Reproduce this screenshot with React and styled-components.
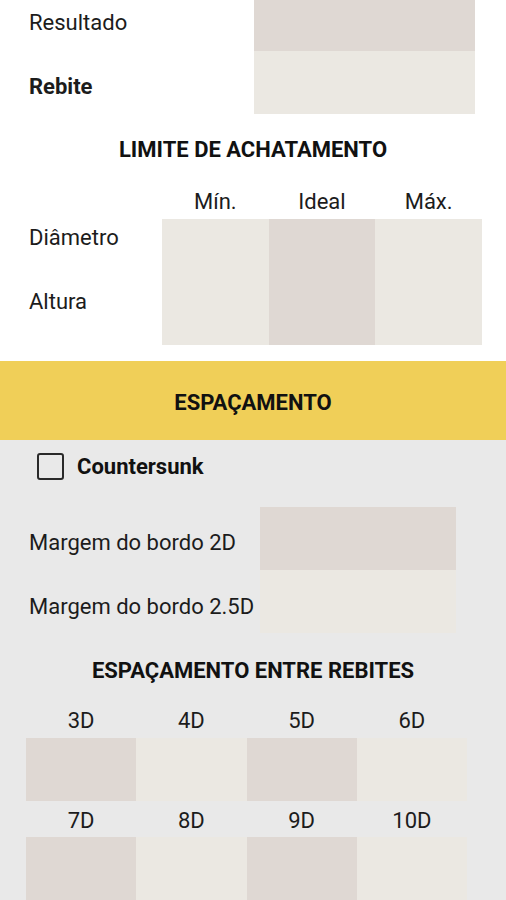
import React from 'react';
import styled, { createGlobalStyle } from 'styled-components';

const GlobalStyle = createGlobalStyle`
  html, body {
    margin: 0;
    padding: 0;
    background: #e9e9e9;
  }
  body {
    width: 506px;
    height: 900px;
    overflow: hidden;
    font-family: Roboto, 'Liberation Sans', sans-serif;
    color: #1c1c1c;
  }
`;

const DARK = '#dfd8d3';
const LIGHT = '#ebe8e2';

const Page = styled.div`
  width: 506px;
  display: flex;
  flex-direction: column;
`;

const WhiteSection = styled.section`
  background: #ffffff;
  margin-top: -12px;
  padding-bottom: 16px;
`;

const GraySection = styled.section`
  background: #e9e9e9;
  padding-bottom: 40px;
`;

const FieldRow = styled.div`
  display: grid;
  grid-template-columns: ${(p) => p.labelWidth}px ${(p) => p.boxWidth}px;
  height: 63px;
`;

const Label = styled.div`
  font-size: 22px;
  line-height: 24px;
  padding-left: 29px;
  padding-top: ${(p) => p.top || 24}px;
  font-weight: ${(p) => (p.bold ? 700 : 400)};
  white-space: nowrap;
`;

const Box = styled.div`
  background: ${(p) => (p.dark ? DARK : LIGHT)};
`;

const Title = styled.h2`
  margin: ${(p) => p.top}px 0 0;
  font-size: 22px;
  line-height: 24px;
  font-weight: 700;
  text-align: center;
  color: #111;
`;

const LimitHead = styled.div`
  display: grid;
  grid-template-columns: 162px repeat(3, 106.67px);
  margin-top: 26px;
  height: 31px;
`;

const HeadCell = styled.div`
  font-size: 22px;
  line-height: 28px;
  text-align: center;
`;

const LimitGrid = styled.div`
  display: grid;
  grid-template-columns: 162px repeat(3, 106.67px);
  grid-template-rows: 63px 63px;
`;

const Banner = styled.div`
  height: 79px;
  background: #f0cf58;
  display: flex;
  align-items: center;
  justify-content: center;
  padding-top: 3px;
  box-sizing: border-box;
  font-size: 22px;
  font-weight: 700;
  color: #111;
`;

const CheckRow = styled.label`
  display: flex;
  align-items: center;
  gap: 13px;
  padding: 12px 0 0 37px;
  height: 28px;
  font-size: 22px;
  font-weight: 700;
  color: #111;
`;

const CheckBox = styled.span`
  width: 27px;
  height: 27px;
  box-sizing: border-box;
  border: 2.5px solid #2a2a2a;
  border-radius: 3px;
`;

const MarginBlock = styled.div`
  margin-top: 27px;
`;

const SpacingGrid = styled.div`
  display: grid;
  grid-template-columns: repeat(4, 110.25px);
  row-gap: 8px;
  padding-left: 26px;
  margin-top: 26px;
`;

const Cell = styled.div`
  display: flex;
  flex-direction: column;
`;

const CellLabel = styled.div`
  font-size: 22px;
  line-height: 24px;
  text-align: center;
  margin-bottom: 4.5px;
`;

const CellBox = styled.div`
  height: 63px;
  background: ${(p) => (p.dark ? DARK : LIGHT)};
`;

const spacing = ['3D', '4D', '5D', '6D', '7D', '8D', '9D', '10D'];

export default function App() {
  return (
    <Page>
      <GlobalStyle />
      <WhiteSection>
        <FieldRow labelWidth={254} boxWidth={221}>
          <Label top={23}>Resultado</Label>
          <Box dark />
        </FieldRow>
        <FieldRow labelWidth={254} boxWidth={221}>
          <Label bold top={24}>Rebite</Label>
          <Box />
        </FieldRow>

        <Title top={24}>LIMITE DE ACHATAMENTO</Title>

        <LimitHead>
          <span />
          <HeadCell>Mín.</HeadCell>
          <HeadCell>Ideal</HeadCell>
          <HeadCell>Máx.</HeadCell>
        </LimitHead>
        <LimitGrid>
          <Label top={7}>Diâmetro</Label>
          <Box />
          <Box dark />
          <Box />
          <Label top={8}>Altura</Label>
          <Box />
          <Box dark />
          <Box />
        </LimitGrid>
      </WhiteSection>

      <Banner>ESPAÇAMENTO</Banner>

      <GraySection>
        <CheckRow>
          <CheckBox />
          Countersunk
        </CheckRow>

        <MarginBlock>
          <FieldRow labelWidth={260} boxWidth={196}>
            <Label top={24}>Margem do bordo 2D</Label>
            <Box dark />
          </FieldRow>
          <FieldRow labelWidth={260} boxWidth={196}>
            <Label top={25}>Margem do bordo 2.5D</Label>
            <Box />
          </FieldRow>
        </MarginBlock>

        <Title top={26}>ESPAÇAMENTO ENTRE REBITES</Title>

        <SpacingGrid>
          {spacing.map((s, i) => (
            <Cell key={s}>
              <CellLabel>{s}</CellLabel>
              <CellBox dark={i % 2 === 0} />
            </Cell>
          ))}
        </SpacingGrid>
      </GraySection>
    </Page>
  );
}
